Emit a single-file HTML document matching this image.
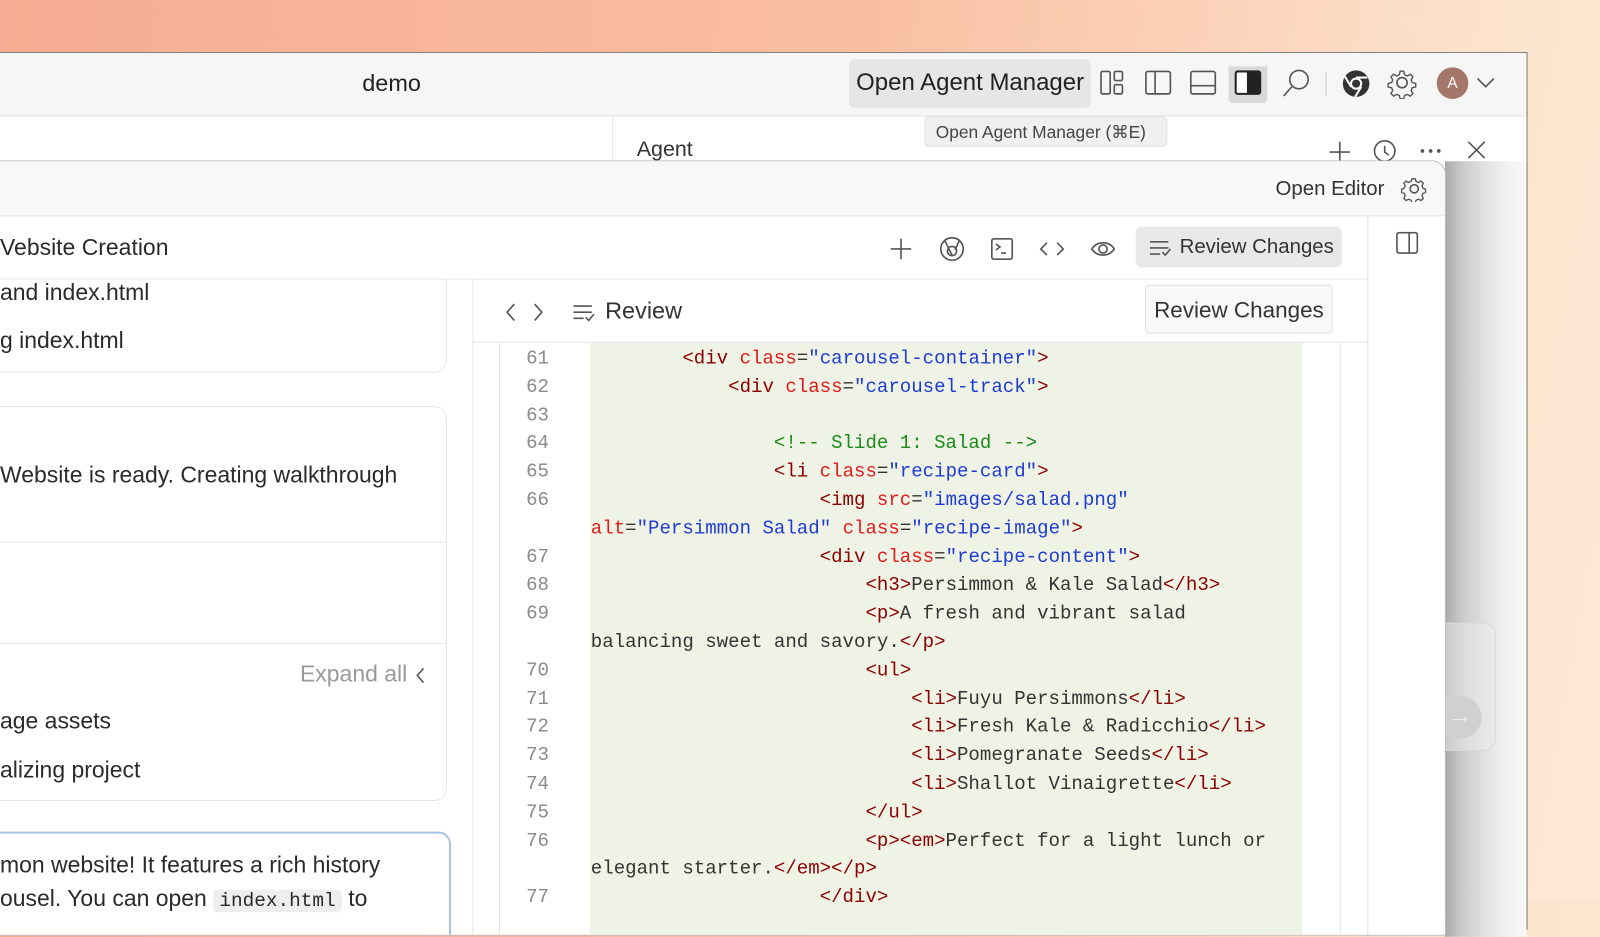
<!DOCTYPE html>
<html><head><meta charset="utf-8"><style>
*{margin:0;padding:0;box-sizing:border-box}
body{width:1600px;height:900px;overflow:hidden;position:relative;font-family:"Liberation Sans",sans-serif;color:#333;
background:linear-gradient(100deg,#f7ab94 0%,#f9bfa3 50%,#fde3cc 85%,#fde9d6 100%)}
#w{position:absolute;left:0;top:0;width:1568px;height:882px;transform:scale(1.0204);transform-origin:0 0}
.abs{position:absolute}
.back{left:0;top:51px;width:1497px;height:860px;background:#fff;border:1px solid #7a7a7a;border-left:none}
.title{left:0;top:0;width:1496px;height:62px;background:#f6f6f6;border-bottom:1px solid #e4e4e4}
.front{left:0;top:157px;width:1417px;height:760px;background:#fff;border:1px solid #bdbdbd;border-left:none;border-top-right-radius:14px;overflow:hidden}
.ic{stroke:#555;fill:none;stroke-width:1.6}
.code{font-family:"Liberation Mono",monospace;font-size:18.7px;white-space:pre}
.ln{position:absolute;left:490px;width:48px;text-align:right;color:#8a8a8a;font-family:"Liberation Mono",monospace;font-size:18.7px}
.t{color:#8b0000}.a{color:#e21b1b}.s{color:#1f3bd1}.c{color:#1a8a1a}
.card{position:absolute;left:-20px;width:458px;border:1px solid #e6e6e6;border-radius:12px;background:#fff}
.lt{position:absolute;font-size:22.5px;color:#2a2a2a}
</style></head><body><div id="w">
<div class="abs back">
 <div class="abs title">
  <div class="abs" style="left:355px;top:16px;font-size:23px;color:#222">demo</div>
  <div class="abs" style="left:832px;top:6px;width:237px;height:48px;background:#e6e6e6;border-radius:6px"></div>
  <div class="abs" style="left:839px;top:15px;font-size:23.5px;color:#222">Open Agent Manager</div>
  <svg class="abs" style="left:1075px;top:13px" width="210" height="36">
   <g class="ic" stroke="#333"><rect x="4" y="5" width="9" height="22" rx="1.5"/><rect x="17" y="5" width="8" height="9" rx="1.5"/><rect x="17" y="18" width="8" height="9" rx="1.5"/>
   <rect x="48" y="5" width="24" height="22" rx="2"/><line x1="57" y1="5" x2="57" y2="27"/>
   <rect x="92" y="5" width="24" height="22" rx="2"/><line x1="92" y1="19" x2="116" y2="19"/></g>
   <rect x="129" y="-5" width="38" height="42" rx="6" fill="#d9d9d9"/>
   <rect x="136" y="5" width="24" height="22" rx="2" fill="#fff" stroke="#222" stroke-width="2"/><rect x="147" y="5" width="13" height="22" fill="#222"/>
   <g class="ic" stroke="#333" stroke-width="1.8"><circle cx="198" cy="13" r="9"/><line x1="191" y1="20" x2="183" y2="29"/></g>
  </svg>
  <div class="abs" style="left:1299px;top:18px;width:1px;height:24px;background:#ccc"></div>
  <svg class="abs" style="left:1313px;top:14px" width="32" height="32"><circle cx="16" cy="16" r="13" fill="#333"/><circle cx="16" cy="16" r="6" fill="#fff"/><circle cx="16" cy="16" r="4" fill="#333"/><path d="M16 10 L27 10 M11 19 L5 9 M21 19 L15 29" stroke="#fff" stroke-width="2"/></svg>
  <svg class="abs" style="left:1358px;top:13px" width="32" height="32"><circle cx="16" cy="16" r="5" class="ic" stroke="#333"/><path d="M14 3h4l1 4 3 1.5 3.5-2 3 3-2 3.5 1.2 3 4 1v4l-4 1-1.2 3 2 3.5-3 3-3.5-2-3 1.2-1 4h-4l-1-4-3-1.200-3.5 2-3-3 2-3.5-1.2-3-4-1v-4l4-1 1.2-3-2-3.5 3-3 3.5 2 3-1.5z" class="ic" stroke="#333" transform="scale(.86) translate(2.5 2.5)"/></svg>
  <div class="abs" style="left:1408px;top:14px;width:31px;height:31px;border-radius:50%;background:#a4776a;color:#fff;font-size:15px;text-align:center;line-height:31px">A</div>
  <svg class="abs" style="left:1446px;top:22px" width="20" height="14"><path d="M2 3l8 8 8-8" class="ic" stroke="#333"/></svg>
 </div>
 <div class="abs" style="left:600px;top:62px;width:1px;height:50px;background:#e4e4e4"></div>
 <div class="abs" style="left:624px;top:83px;font-size:21px;color:#333">Agent</div>
 <svg class="abs" style="left:1300px;top:82px" width="170" height="30"><g class="ic" stroke="#999"><path d="M13 5v20M3 15h20"/><circle cx="57" cy="14" r="10"/><path d="M57 9v6l4 3"/></g><g fill="#555"><circle cx="94" cy="14" r="1.8"/><circle cx="102" cy="14" r="1.8"/><circle cx="110" cy="14" r="1.8"/></g><path d="M139 5l16 16M155 5l-16 16" class="ic" stroke="#333"/></svg>
 <div class="abs" style="left:1416px;top:106px;width:80px;height:760px;background:linear-gradient(to right,#a9a9a9 0%,#c9c9c9 20%,#e2e2e2 50%,#f3f3f3 80%,#f8f8f8 100%)"></div>
 <div class="abs" style="left:1416px;top:558px;width:50px;height:126px;background:rgba(235,235,235,.5);border:1px solid #d8d8d8;border-radius:0 12px 12px 0;border-left:none"></div>
 <div class="abs" style="left:1410px;top:630px;width:42px;height:42px;border-radius:50%;background:#d0d0d0;color:#eee;font-size:24px;text-align:center;line-height:40px">→</div>
</div>
<div class="abs" style="left:906px;top:114px;width:238px;height:30px;background:#f0f0f0;border:1px solid #e2e2e2;border-radius:4px;font-size:17px;color:#444;padding:5px 0 0 10px;z-index:5">Open Agent Manager (⌘E)</div>
<div class="abs front">
 <div class="abs" style="left:0;top:0;width:1417px;height:54px;background:#f8f8f8;border-bottom:1px solid #e6e6e6"></div>
 <div class="abs" style="left:1250px;top:16px;font-size:20px;color:#333">Open Editor</div>
 <svg class="abs" style="left:1373px;top:14px" width="26" height="26"><circle cx="13" cy="13" r="4" class="ic"/><path d="M11 2h4l1 3 3 1.3 3-1.6 2.6 2.6-1.6 3 1.3 3 3 1v4l-3 1-1.3 3 1.6 3-2.6 2.6-3-1.6-3 1.3-1 3h-4l-1-3-3-1.3-3 1.6-2.6-2.6 1.6-3-1.3-3-3-1v-4l3-1 1.3-3-1.6-3 2.6-2.6 3 1.6 3-1.3z" class="ic" transform="scale(.82) translate(2 2)"/></svg>
 <div class="abs" style="left:0;top:115px;width:1340px;height:1px;background:#e6e6e6"></div>
 <div class="lt" style="left:0;top:72px;font-size:22.5px">Vebsite Creation</div>
 <svg class="abs" style="left:870px;top:72px" width="240" height="30"><g class="ic" stroke="#666"><path d="M13 4v20M3 14h20"/><circle cx="63" cy="14" r="11"/><circle cx="63" cy="16" r="4.5"/><path d="M56 6l7 14M70 6l-4 9"/><rect x="102" y="4" width="20" height="20" rx="2"/><path d="M106 9l4 3-4 3M111 18h5"/><path d="M156 8l-6 6 6 6M166 8l6 6-6 6"/><path d="M200 14c5-8 17-8 22 0-5 8-17 8-22 0z"/><circle cx="211" cy="14" r="4"/></g></svg>
 <div class="abs" style="left:1113px;top:64px;width:202px;height:40px;background:#e8e8ea;border-radius:6px"></div>
 <svg class="abs" style="left:1125px;top:75px" width="24" height="20"><path d="M2 4h18M2 10h18M2 16h10M14 14l3 3 5-6" class="ic" stroke="#444"/></svg>
 <div class="abs" style="left:1156px;top:73px;font-size:20px;color:#333">Review Changes</div>
 <svg class="abs" style="left:1368px;top:69px" width="22" height="22"><rect x="1" y="1" width="20" height="20" rx="2" class="ic" stroke="#888"/><line x1="13" y1="1" x2="13" y2="21" class="ic" stroke="#888"/></svg>
 <div class="abs" style="left:1340px;top:54px;width:1px;height:710px;background:#e6e6e6"></div>
 <div class="abs" style="left:463px;top:115px;width:1px;height:650px;background:#e6e6e6"></div>
 <div class="abs" style="left:464px;top:177px;width:876px;height:1px;background:#e6e6e6"></div>
 <svg class="abs" style="left:492px;top:137px" width="110" height="22"><g class="ic" stroke="#666"><path d="M12 3l-7 8 7 8"/></g><g class="ic" stroke="#bbb"><path d="M32 3l7 8-7 8"/></g><path d="M70 5h18M70 11h18M70 17h10M82 16l3 3 5-6" class="ic" stroke="#555"/></svg>
 <div class="abs" style="left:593px;top:133px;font-size:23px;color:#333">Review</div>
 <div class="abs" style="left:489px;top:178px;width:1px;height:600px;background:#e6e6e6"></div>
 <div class="abs" style="left:578px;top:178px;width:698px;height:600px;background:#eff3e6"></div>
 <div class="abs" style="left:1313px;top:178px;width:1px;height:600px;background:#e6e6e6"></div>
 <div class="abs code" style="left:579px;top:180px;line-height:27.8px"><span class="t">        &lt;div</span> <span class="a">class</span>=<span class="s">"carousel-container"</span><span class="t">&gt;</span>
<span class="t">            &lt;div</span> <span class="a">class</span>=<span class="s">"carousel-track"</span><span class="t">&gt;</span>

<span class="c">                &lt;!-- Slide 1: Salad --&gt;</span>
<span class="t">                &lt;li</span> <span class="a">class</span>=<span class="s">"recipe-card"</span><span class="t">&gt;</span>
<span class="t">                    &lt;img</span> <span class="a">src</span>=<span class="s">"images/salad.png"</span>
<span class="a">alt</span>=<span class="s">"Persimmon Salad"</span> <span class="a">class</span>=<span class="s">"recipe-image"</span><span class="t">&gt;</span>
<span class="t">                    &lt;div</span> <span class="a">class</span>=<span class="s">"recipe-content"</span><span class="t">&gt;</span>
<span class="t">                        &lt;h3&gt;</span>Persimmon &amp; Kale Salad<span class="t">&lt;/h3&gt;</span>
<span class="t">                        &lt;p&gt;</span>A fresh and vibrant salad
balancing sweet and savory.<span class="t">&lt;/p&gt;</span>
<span class="t">                        &lt;ul&gt;</span>
<span class="t">                            &lt;li&gt;</span>Fuyu Persimmons<span class="t">&lt;/li&gt;</span>
<span class="t">                            &lt;li&gt;</span>Fresh Kale &amp; Radicchio<span class="t">&lt;/li&gt;</span>
<span class="t">                            &lt;li&gt;</span>Pomegranate Seeds<span class="t">&lt;/li&gt;</span>
<span class="t">                            &lt;li&gt;</span>Shallot Vinaigrette<span class="t">&lt;/li&gt;</span>
<span class="t">                        &lt;/ul&gt;</span>
<span class="t">                        &lt;p&gt;&lt;em&gt;</span>Perfect for a light lunch or
elegant starter.<span class="t">&lt;/em&gt;&lt;/p&gt;</span>
<span class="t">                    &lt;/div&gt;</span></div>
 <div class="ln" style="top:180px;line-height:27.8px">61<br>62<br>63<br>64<br>65<br>66<br><br>67<br>68<br>69<br><br>70<br>71<br>72<br>73<br>74<br>75<br>76<br><br>77</div>
 <div class="abs" style="left:1122px;top:121px;width:184px;height:48px;background:#f8f8f8;border:1px solid #e2e2e2;border-radius:4px;font-size:22px;color:#333;padding:11px 0 0 8px;white-space:nowrap;overflow:hidden">Review Changes</div>
 <div class="card" style="top:116px;height:91px;border-top:none;border-radius:0 0 12px 12px"></div>
 <div class="lt" style="left:0;top:116px">and index.html</div>
 <div class="lt" style="left:0;top:163px">g index.html</div>
 <div class="card" style="top:240px;height:387px"></div>
 <div class="abs" style="left:0;top:373px;width:437px;height:1px;background:#e8e8e8"></div>
 <div class="abs" style="left:0;top:472px;width:437px;height:1px;background:#e8e8e8"></div>
 <div class="lt" style="left:0;top:295px">Website is ready. Creating walkthrough</div>
 <div class="lt" style="left:294px;top:490px;color:#999">Expand all</div>
 <svg class="abs" style="left:405px;top:494px" width="14" height="20"><path d="M10 3l-6 7 6 7" class="ic" stroke="#999"/></svg>
 <div class="lt" style="left:0;top:536px">age assets</div>
 <div class="lt" style="left:0;top:584px">alizing project</div>
 <div class="card" style="top:657px;height:140px;width:462px;border:2px solid #a8c3e3"></div>
 <div class="lt" style="left:0;top:677px">mon website! It features a rich history</div>
 <div class="lt" style="left:0;top:710px">ousel. You can open <span style="font-family:'Liberation Mono',monospace;font-size:19px;background:#eee;border-radius:4px;padding:0 6px">index.html</span> to</div>
</div>
</div></body></html>
